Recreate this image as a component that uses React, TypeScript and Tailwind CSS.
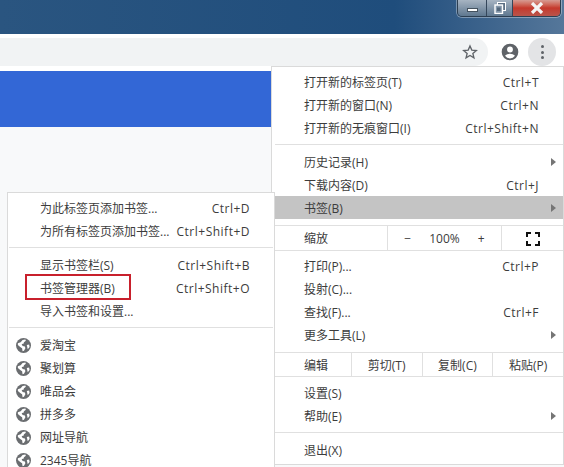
const font = { fontFamily: '"Open Sans", "Noto Sans CJK SC", sans-serif' };

function Arrow() {
  return <span className="h-0 w-0 border-y-[4px] border-l-[5px] border-y-transparent border-l-[#757575]" />;
}

function Row({
  label,
  shortcut,
  arrow,
  active,
  indent = 'pl-[29px]',
}: {
  label: string;
  shortcut?: string;
  arrow?: boolean;
  active?: boolean;
  indent?: string;
}) {
  return (
    <div className={`flex h-[23px] items-center justify-between ${indent} ${active ? 'bg-[#c4c4c4]' : ''}`}>
      <span className="pt-[3px]">{label}</span>
      {shortcut && <span className="pr-[24px] pt-[3px] tracking-[0.5px]">{shortcut}</span>}
      {arrow && (
        <span className="flex w-[12px] shrink-0 items-center">
          <Arrow />
        </span>
      )}
    </div>
  );
}

function Sep({ className = 'my-[5px]' }: { className?: string }) {
  return <div className={`h-px bg-[#e0e0e0] ${className}`} />;
}

function Globe() {
  return (
    <svg viewBox="0 0 16 16" className="mt-[2px] h-[15px] w-[15px] shrink-0">
      <circle cx="8" cy="8" r="8" fill="#6a6d70" />
      <path
        d="M2 5.500 5 4.500 7 2 10 1.500 10.500 3 8.500 4.500 8 6 6 6.500 7 8.500 9.500 9 10 11 8.500 13.500 7 14 6.500 11 4.500 9.500 2 7.500Z M11.500 7.500 14 7 14.500 9.500 12.500 12 12 9.500Z"
        fill="#fff"
      />
    </svg>
  );
}

function Site({ label }: { label: string }) {
  return (
    <div className="flex h-[23px] items-center gap-[9px] pl-[8px]">
      <Globe />
      <span className="pt-[3px]">{label}</span>
    </div>
  );
}

function WinButtons() {
  return (
    <div className="flex h-[17px] overflow-hidden rounded-b-[5px] border border-t-0 border-[#2d3f52] shadow-[0_0_0_1px_rgba(255,255,255,0.35)]">
      <div className="flex w-[29px] items-end justify-center border-r border-[#34465a] bg-gradient-to-b from-[#a7b4c2] to-[#5f7890] pb-[4px]">
        <div className="h-[4px] w-[11px] border border-[#44525f] bg-white" />
      </div>
      <div className="flex w-[26px] items-center justify-center border-r border-[#34465a] bg-gradient-to-b from-[#a7b4c2] to-[#5f7890]">
        <svg viewBox="0 0 12 12" className="h-[12px] w-[12px]">
          <rect x="3.500" y="0.500" width="8" height="8" fill="#5d7084" stroke="#fff" />
          <rect x="1" y="3" width="7.500" height="8.500" fill="#8497aa" stroke="#fff" strokeWidth="1.400" />
          <rect x="3" y="5.500" width="3.500" height="3.500" fill="#53677b" />
        </svg>
      </div>
      <div className="flex w-[47px] items-center justify-center bg-gradient-to-b from-[#d69b93] via-[#c5382c] to-[#b9544b]">
        <svg viewBox="0 0 14 12" className="h-[12px] w-[14px]">
          <path d="M2 1 L12 11 M12 1 L2 11" stroke="#f4f4f4" strokeWidth="3.200" />
        </svg>
      </div>
    </div>
  );
}

export default function App() {
  return (
    <div
      className="relative h-[467px] w-[564px] overflow-hidden bg-[#f8f9fa] text-[12px] leading-none text-[#3c3c3c]"
      style={font}
    >
      {/* title bar */}
      <div className="flex h-[34px] justify-end bg-gradient-to-r from-[#2a5580] via-[#1f4d7c] via-70% to-[#55779a] pr-[3px]">
        <WinButtons />
      </div>

      {/* toolbar */}
      <div className="flex h-[32px] items-center bg-white pt-[4px]">
        <div className="flex h-[28px] w-[488px] items-center justify-end rounded-r-[14px] bg-[#f1f3f4] pr-[10px]">
          <svg viewBox="0 0 24 24" className="h-[16px] w-[16px]" fill="none" stroke="#5f6368" strokeWidth="2">
            <path d="M12 3l2.700 6.200 6.800.600-5.200 4.400 1.600 6.600L12 17.300l-5.900 3.500 1.600-6.600-5.200-4.400 6.800-.600z" />
          </svg>
        </div>
        <svg viewBox="0 0 24 24" className="ml-[12px] h-[20px] w-[20px]" fill="#5f6368">
          <path d="M12 2a10 10 0 100 20 10 10 0 000-20zm0 3.500a3.500 3.500 0 110 7 3.500 3.500 0 010-7zm0 14.200a7.400 7.400 0 01-6-3.100c1.200-1.700 4-2.600 6-2.600s4.800.900 6 2.600a7.400 7.400 0 01-6 3.100z" />
        </svg>
        <div className="ml-[8px] flex h-[28px] w-[28px] flex-col items-center justify-center gap-[2.500px] rounded-full bg-[#e3e4e6]">
          <span className="h-[3px] w-[3px] rounded-full bg-[#5f6368]" />
          <span className="h-[3px] w-[3px] rounded-full bg-[#5f6368]" />
          <span className="h-[3px] w-[3px] rounded-full bg-[#5f6368]" />
        </div>
      </div>

      {/* page behind the menus */}
      <div className="h-[5px] w-[271px] bg-white" />
      <div className="h-[56px] w-[271px] bg-[#3367d6]" />

      {/* main menu */}
      <div className="absolute left-[271px] top-[66px] w-[293px] border border-[#dadada] bg-white pb-0 pl-[3px] pt-[3px]">
        <Row label="打开新的标签页(T)" shortcut="Ctrl+T" />
        <Row label="打开新的窗口(N)" shortcut="Ctrl+N" />
        <Row label="打开新的无痕窗口(I)" shortcut="Ctrl+Shift+N" />
        <Sep />
        <Row label="历史记录(H)" arrow />
        <Row label="下载内容(D)" shortcut="Ctrl+J" />
        <Row label="书签(B)" arrow active />
        <Sep className="mt-[6px]" />
        <div className="flex h-[24px] items-center pt-[2px]">
          <span className="w-[112px] pl-[29px]">缩放</span>
          <div className="-mt-[2px] flex h-[24px] w-[115px] items-center justify-center gap-[18px] border-x border-[#e0e0e0] pt-[2px]">
            <span>−</span>
            <span>100%</span>
            <span>+</span>
          </div>
          <div className="flex flex-1 justify-center">
            <svg viewBox="0 0 14 14" className="h-[14px] w-[14px]" fill="none" stroke="#111" strokeWidth="2">
              <path d="M1 5V1h4M9 1h4v4M13 9v4H9M5 13H1V9" />
            </svg>
          </div>
        </div>
        <Sep className="mb-[3px]" />
        <Row label="打印(P)..." shortcut="Ctrl+P" />
        <Row label="投射(C)..." />
        <Row label="查找(F)..." shortcut="Ctrl+F" />
        <Row label="更多工具(L)" arrow />
        <Sep className="mt-[6px]" />
        <div className="flex h-[23px] items-center">
          <span className="w-[76px] pl-[29px] pt-[3px]">编辑</span>
          <span className="flex h-full w-[71px] items-center justify-center border-l border-[#e0e0e0] pt-[2px]">剪切(T)</span>
          <span className="flex h-full w-[71px] items-center justify-center border-l border-[#e0e0e0] pt-[2px]">复制(C)</span>
          <span className="flex h-full w-[71px] items-center justify-center border-l border-[#e0e0e0] pt-[2px]">粘贴(P)</span>
        </div>
        <Sep className="mb-[4px]" />
        <Row label="设置(S)" />
        <Row label="帮助(E)" arrow />
        <Sep />
        <Row label="退出(X)" />
        <div className="h-[3px]" />
      </div>

      {/* bookmarks submenu */}
      <div className="absolute left-[7px] top-[192px] h-[280px] w-[268px] border border-[#dadada] bg-white pt-[3px]">
        <Row indent="pl-[32px]" label="为此标签页添加书签..." shortcut="Ctrl+D" />
        <Row indent="pl-[32px]" label="为所有标签页添加书签..." shortcut="Ctrl+Shift+D" />
        <Sep className="mx-px my-[5px]" />
        <Row indent="pl-[32px]" label="显示书签栏(S)" shortcut="Ctrl+Shift+B" />
        <div className="relative">
          <Row indent="pl-[32px]" label="书签管理器(B)" shortcut="Ctrl+Shift+O" />
          <div className="absolute left-[17px] top-[-2px] h-[26px] w-[106px] border-2 border-[#c8202c]" />
        </div>
        <Row indent="pl-[32px]" label="导入书签和设置..." />
        <Sep className="mx-px my-[5px]" />
        <Site label="爱淘宝" />
        <Site label="聚划算" />
        <Site label="唯品会" />
        <Site label="拼多多" />
        <Site label="网址导航" />
        <Site label="2345导航" />
      </div>
    </div>
  );
}
